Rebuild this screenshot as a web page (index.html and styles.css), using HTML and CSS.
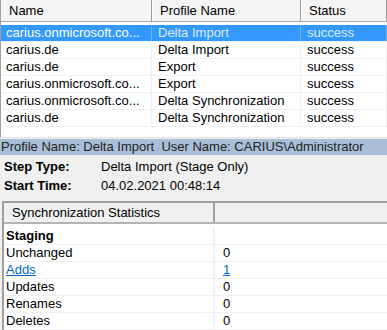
FILE: index.html
```
<!DOCTYPE html>
<html lang="en">
<head>
    <meta charset="UTF-8">
    <title>Operations</title>
    <link rel="stylesheet" href="styles.css">
</head>
<body>
    <div class="runs">
        <div class="runs-head">
            <div class="hcell">Name</div>
            <div class="hcell">Profile Name</div>
            <div class="hcell">Status</div>
        </div>
        <div class="runs-body">
            <div class="run selected">
                <div class="cell">carius.onmicrosoft.co...</div>
                <div class="cell">Delta Import</div>
                <div class="cell">success</div>
            </div>
            <div class="run">
                <div class="cell">carius.de</div>
                <div class="cell">Delta Import</div>
                <div class="cell">success</div>
            </div>
            <div class="run">
                <div class="cell">carius.de</div>
                <div class="cell">Export</div>
                <div class="cell">success</div>
            </div>
            <div class="run">
                <div class="cell">carius.onmicrosoft.co...</div>
                <div class="cell">Export</div>
                <div class="cell">success</div>
            </div>
            <div class="run">
                <div class="cell">carius.onmicrosoft.co...</div>
                <div class="cell">Delta Synchronization</div>
                <div class="cell">success</div>
            </div>
            <div class="run">
                <div class="cell">carius.de</div>
                <div class="cell">Delta Synchronization</div>
                <div class="cell">success</div>
            </div>
        </div>
    </div>

    <div class="profile-bar">Profile Name: Delta Import&nbsp; User Name: CARIUS\Administrator</div>

    <div class="step-info">
        <div class="label">Step Type:</div>
        <div>Delta Import (Stage Only)</div>
        <div class="label">Start Time:</div>
        <div>04.02.2021 00:48:14</div>
    </div>

    <div class="stats">
        <div class="stats-head">
            <div class="hcell">Synchronization Statistics</div>
            <div class="hcell"></div>
        </div>
        <div class="stat">
            <div class="cell group">Staging</div>
            <div class="cell"></div>
        </div>
        <div class="stat">
            <div class="cell">Unchanged</div>
            <div class="cell">0</div>
        </div>
        <div class="stat">
            <div class="cell"><a href="#">Adds</a></div>
            <div class="cell"><a href="#">1</a></div>
        </div>
        <div class="stat">
            <div class="cell">Updates</div>
            <div class="cell">0</div>
        </div>
        <div class="stat">
            <div class="cell">Renames</div>
            <div class="cell">0</div>
        </div>
        <div class="stat">
            <div class="cell">Deletes</div>
            <div class="cell">0</div>
        </div>
    </div>
</body>
</html>
```

FILE: styles.css
```
body {
    margin: 0;
    background-color: #f0f0f0;
    color: #000;
    font-family: "Liberation Sans", Arial, sans-serif;
    font-size: 13px;
    overflow: hidden;
}

.runs {
    background-color: #fff;
    border-left: 1px solid #a0a0a0;
    height: 137px;
    border-bottom: 1px solid #e3e3e3;
}

.runs-head,
.run {
    display: grid;
    grid-template-columns: 151px 149px 1fr;
}

.runs-head {
    height: 21px;
    background-color: #f4f4f4;
    border-bottom: 1px solid #a8a8a8;
}

.hcell {
    line-height: 21px;
    padding-left: 8px;
    border-right: 1px solid #9a9a9a;
    box-shadow: 1px 0 0 #fff;
    white-space: nowrap;
}

.runs-body {
    padding-top: 3px;
}

.run {
    height: 16px;
    border-bottom: 1px solid #f0f0f0;
}

.cell {
    line-height: 16px;
    padding-left: 5px;
    border-right: 1px solid #f0f0f0;
    white-space: nowrap;
    overflow: hidden;
}

.run .cell:nth-child(2),
.run .cell:nth-child(3) {
    padding-left: 6px;
}

.run.selected {
    background-color: #3399ff;
    color: #fff;
}

.run.selected .cell {
    border-right-color: #6db3fb;
}

.run.selected .cell + .cell {
    color: #dcebfc;
}

.profile-bar {
    height: 16px;
    line-height: 16px;
    margin-top: 1px;
    padding-left: 1px;
    background-color: #a9bfd8;
    color: #222;
    white-space: nowrap;
}

.step-info {
    display: grid;
    grid-template-columns: 97px 1fr;
    padding: 3px 0 0 4px;
    row-gap: 2px;
    line-height: 17px;
}

.label {
    font-weight: bold;
}

.stats {
    margin: 7px 0 0 2px;
    border-top: 2px solid #a0a0a0;
    border-left: 2px solid #a0a0a0;
    background-color: #fff;
}

.stats-head,
.stat {
    display: grid;
    grid-template-columns: 211px 1fr;
}

.stats-head {
    height: 19px;
    background-color: #f0f0f0;
    border-bottom: 2px solid #b4b4b4;
}

.stats-head .hcell {
    line-height: 19px;
    padding-left: 8px;
    border-right: 2px solid #a0a0a0;
    box-shadow: none;
}

.stats-head .hcell:last-child {
    border-right: none;
}

.stats-head + .stat {
    margin-top: 4px;
}

.stat {
    height: 16px;
    border-bottom: 1px solid #f0f0f0;
}

.stat .cell {
    line-height: 16px;
    padding-left: 2px;
    border-right: 2px solid #f0f0f0;
}

.stat .cell:last-child {
    padding-left: 8px;
    border-right: none;
}

.group {
    font-weight: bold;
}

a {
    color: #0066cc;
}
```
